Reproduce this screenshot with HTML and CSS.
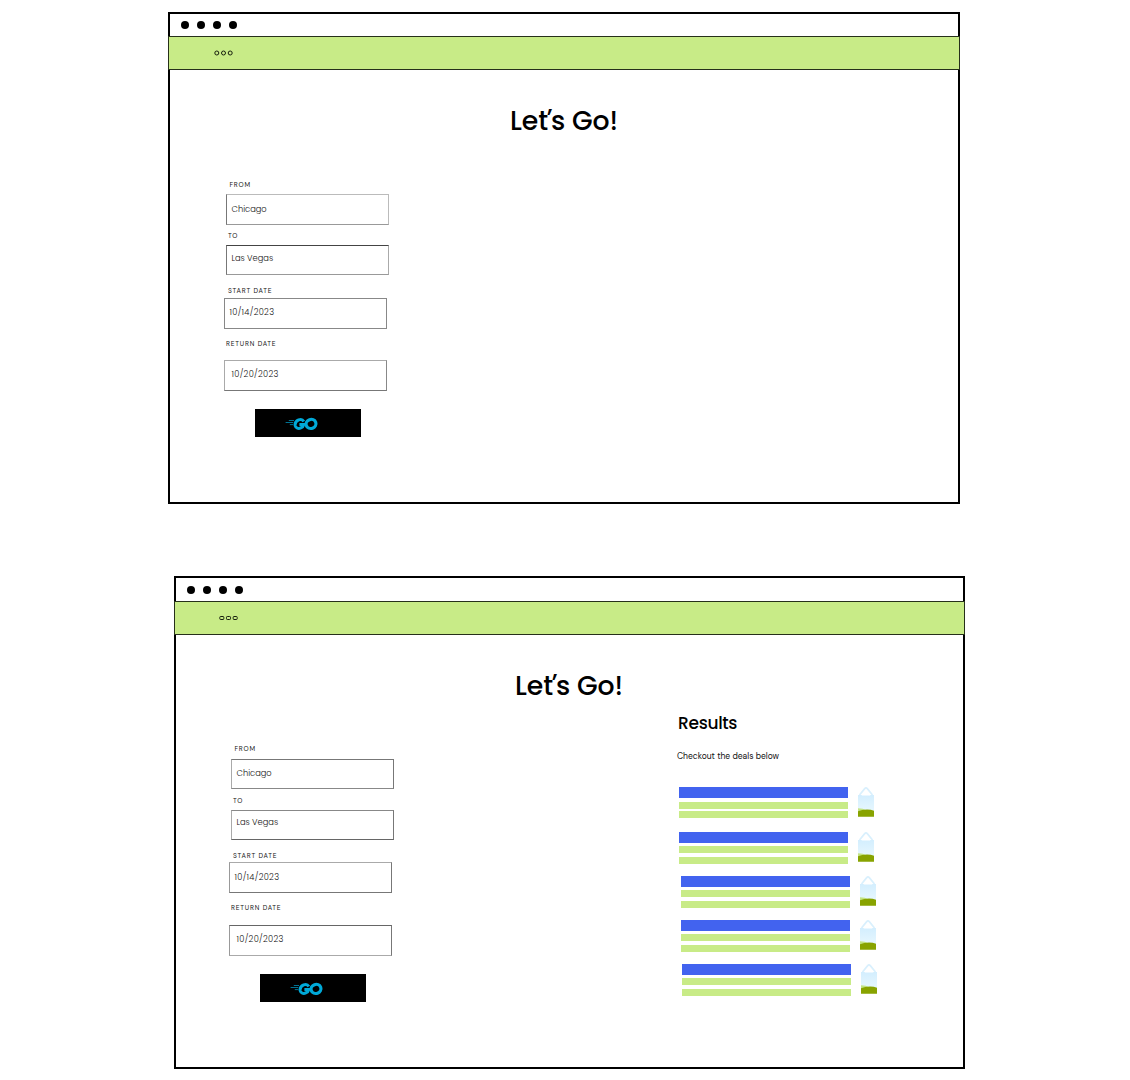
FILE: index.html
```html
<!DOCTYPE html>
<html lang="en">
<head>
<meta charset="utf-8">
<title>Let’s Go!</title>
<link rel="stylesheet" href="styles.css">
</head>
<body>
<svg class="defs" width="0" height="0" aria-hidden="true">
  <defs>
    <linearGradient id="sky" x1="0" y1="0" x2="0" y2="1">
      <stop offset="0" stop-color="#d3eefe"/>
      <stop offset="1" stop-color="#edfafe"/>
    </linearGradient>
    <symbol id="bag" viewBox="0 0 16 30">
      <path d="M1.5 8 6.7 1.6Q8 .2 9.3 1.6L14.5 8" fill="none" stroke="#d9f0fd" stroke-width="1.7"/>
      <path d="M0 8h16v21.5H0z" fill="url(#sky)"/>
      <path d="M3.5 8.5 5 7h6l1.5 1.5z" fill="#fff"/>
      <path d="M0 21.3q5 0 9 2.2v3H0z" fill="#c3e384"/>
      <path d="M0 24.2Q4 22.6 9 22.6q4 0 7 1.2v5.9H0z" fill="#88a300"/>
    </symbol>
    <symbol id="go" viewBox="0 0 34 14">
      <g fill="none" stroke="#00a9d8">
        <path d="M3.8 3.5H9M.6 5.5H8.2M4.8 7.6h3.4" stroke-width=".9" opacity=".75"/>
        <path d="M18.8 4.4C17.8 2.7 15.7 2.1 13.6 2.9 11 4 9.8 6.5 10.2 8.8c.5 2.3 3.2 3.2 5.6 2.1 1.6-.7 2.6-1.8 2.9-3.3h-4.3" stroke-width="3"/>
        <ellipse cx="26" cy="6.9" rx="5" ry="4.5" stroke-width="3.2" transform="rotate(-20 26 6.9)"/>
      </g>
    </symbol>
  </defs>
</svg>
<main class="board">
  <section class="window window-search">
    <div class="titlebar"><i></i><i></i><i></i><i></i></div>
    <nav class="navbar">
      <svg width="20" height="6" fill="none" stroke="#18200e"><circle cx="2.8" cy="3" r="2"/><circle cx="9.5" cy="3" r="2"/><circle cx="16.2" cy="3" r="2"/></svg>
    </nav>
    <div class="content">
      <h1>Let<span class="apostrophe">’</span>s Go!</h1>
      <form class="search">
        <label class="l-from"><span>FROM</span></label>
        <div class="field f-from"><span>Chicago</span></div>
        <label class="l-to"><span>TO</span></label>
        <div class="field f-to"><span>Las Vegas</span></div>
        <label class="l-start"><span>START DATE</span></label>
        <div class="field date f-start"><span>10/14/2023</span></div>
        <label class="l-return"><span>RETURN DATE</span></label>
        <div class="field date f-return"><span>10/20/2023</span></div>
        <button class="go" type="button" aria-label="Go"><svg width="34" height="14"><use href="#go"/></svg></button>
      </form>
    </div>
  </section>

  <section class="window window-results">
    <div class="titlebar"><i></i><i></i><i></i><i></i></div>
    <nav class="navbar">
      <svg width="20" height="6" fill="none" stroke="#18200e"><rect x=".8" y="1.5" width="4" height="3" rx=".8"/><rect x="7.5" y="1.5" width="4" height="3" rx=".8"/><rect x="14.2" y="1.5" width="4" height="3" rx=".8"/></svg>
    </nav>
    <div class="content">
      <h1>Let<span class="apostrophe">’</span>s Go!</h1>
      <div class="columns">
        <form class="search">
          <label class="l-from"><span>FROM</span></label>
          <div class="field f-from"><span>Chicago</span></div>
          <label class="l-to"><span>TO</span></label>
          <div class="field f-to"><span>Las Vegas</span></div>
          <label class="l-start"><span>START DATE</span></label>
          <div class="field date f-start"><span>10/14/2023</span></div>
          <label class="l-return"><span>RETURN DATE</span></label>
          <div class="field date f-return"><span>10/20/2023</span></div>
          <button class="go" type="button" aria-label="Go"><svg width="34" height="14"><use href="#go"/></svg></button>
        </form>
        <aside class="results">
          <h2><span>Results</span></h2>
          <p><span>Checkout the deals below</span></p>
          <div class="deals">
            <div class="deal deal-tight"><div class="lines"><b></b><s></s><s></s></div><svg width="16" height="30"><use href="#bag"/></svg></div>
            <div class="deal"><div class="lines"><b></b><s></s><s></s></div><svg width="16" height="30"><use href="#bag"/></svg></div>
            <div class="deal shift"><div class="lines"><b></b><s></s><s></s></div><svg width="16" height="30"><use href="#bag"/></svg></div>
            <div class="deal shift"><div class="lines"><b></b><s></s><s></s></div><svg width="16" height="30"><use href="#bag"/></svg></div>
            <div class="deal shift-more"><div class="lines"><b></b><s></s><s></s></div><svg width="16" height="30"><use href="#bag"/></svg></div>
          </div>
        </aside>
      </div>
    </div>
  </section>
</main>
</body>
</html>
```
FILE: styles.css
```css
* { box-sizing: border-box; }

body {
  margin: 0;
  background: #fff;
  color: #000;
  font-family: Poppins, Inter, "Liberation Sans", sans-serif;
}

.defs { display: block; }

.board {
  display: flex;
  flex-direction: column;
  gap: 72px;
  height: 1080px;
  padding: 12px 0 0 168px;
}

.window {
  display: flex;
  flex-direction: column;
  width: 792px;
  height: 492px;
  border: 2px solid #000;
}
.window-results { width: 791px; height: 493px; margin-left: 6px; }

/* Browser chrome */
.titlebar {
  display: flex;
  gap: 8px;
  height: 22px;
  padding: 7px 0 0 11px;
}
.window-results .titlebar { height: 23px; padding: 8px 0 0 10.5px; }
.titlebar i { width: 8px; height: 8px; border-radius: 50%; background: #000; }

.navbar {
  display: flex;
  align-items: center;
  flex: none;
  height: 34px;
  margin: 0 -2px;
  padding-left: 45px;
  background: #c8eb87;
  border: 1px solid #26301a;
}
.window-results .navbar { padding-left: 44px; }

.content { display: flex; flex-direction: column; }
.window-results .content { margin-left: -1px; }
.columns { display: flex; }

h1 {
  margin: 29px 0 0;
  height: 43px;
  font-size: 26.7px;
  font-weight: 500;
  line-height: 43px;
  letter-spacing: -0.1px;
  text-align: center;
}
.apostrophe {
  margin: 0 -1.6px 0 -1.2px;
  font-size: 24px;
  line-height: 0;
  vertical-align: 4px;
}

/* Search form */
.search { width: 240px; padding-left: 54px; }

label {
  display: block;
  height: 10px;
  color: #111;
  font-family: "DM Sans", Poppins, Inter, sans-serif;
  font-size: 6.6px;
  line-height: 10px;
  letter-spacing: .82px;
}
.l-from { margin: 38px 0 0 5.5px; }
.l-to { margin: 6px 0 0 4px; }
.l-start { margin: 11px 0 0 4px; }
.l-return { margin: 10px 0 0 2px; }

.field {
  width: 163px;
  height: 31px;
  padding-left: 4.5px;
  border: 1px solid #888;
  color: #111;
  font-size: 8.3px;
  font-weight: 300;
  line-height: 28px;
}
.date { letter-spacing: .3px; }
.f-from { margin: 4px 0 0 2px; border-color: #bbb #bbb #999 #777; }
.f-to { margin: 4px 0 0 2px; height: 30px; line-height: 25px; border-color: #444 #aaa #999 #777; }
.f-start { margin-top: 2px; line-height: 27px; }
.f-return { margin-top: 11px; padding-left: 6.5px; line-height: 27px; border-color: #aaa #888 #777 #aaa; }

.window-results .l-from { margin-top: 37px; }
.window-results .f-from { margin-top: 5px; height: 30px; line-height: 27px; border-color: #777 #777 #888 #aaa; }
.window-results .f-to { height: 30px; line-height: 23px; border-color: #888 #777 #666 #aaa; }
.window-results .l-to { margin-top: 7px; }
.window-results .l-start { margin-top: 11px; }
.window-results .f-start { margin-top: 1px; line-height: 28px; border-color: #aaa #777 #777 #999; }
.window-results .f-return { margin-top: 12px; border-color: #666 #777 #aaa #999; }

.go {
  display: flex;
  align-items: center;
  width: 106px;
  height: 28px;
  margin: 18px 0 0 31px;
  padding: 2px 0 0 30px;
  border: 0;
  background: #000;
}

/* Results column */
.results { padding: 4px 0 0 262px; }

h2 {
  height: 24px;
  margin: 0;
  font-size: 17px;
  font-weight: 500;
  line-height: 24px;
  letter-spacing: -.3px;
  padding-left: 1px;
}
p {
  height: 14px;
  margin: 15px 0 0;
  color: #111;
  font-family: "DM Sans", Poppins, Inter, sans-serif;
  font-size: 8.5px;
  line-height: 14px;
}

.deals { display: flex; flex-direction: column; gap: 12.15px; padding: 23.4px 0 0 2px; }
.deal { display: flex; gap: 10px; height: 32px; }
.deal.shift { margin-left: 2px; }
.deal.shift-more { margin-left: 3.4px; }
.lines { display: flex; flex-direction: column; width: 169px; }
.lines b { height: 11px; background: #4263ef; }
.lines s { height: 7px; margin-top: 3.5px; background: #c8eb87; }
.deal-tight s + s { margin-top: 2px; }
```
